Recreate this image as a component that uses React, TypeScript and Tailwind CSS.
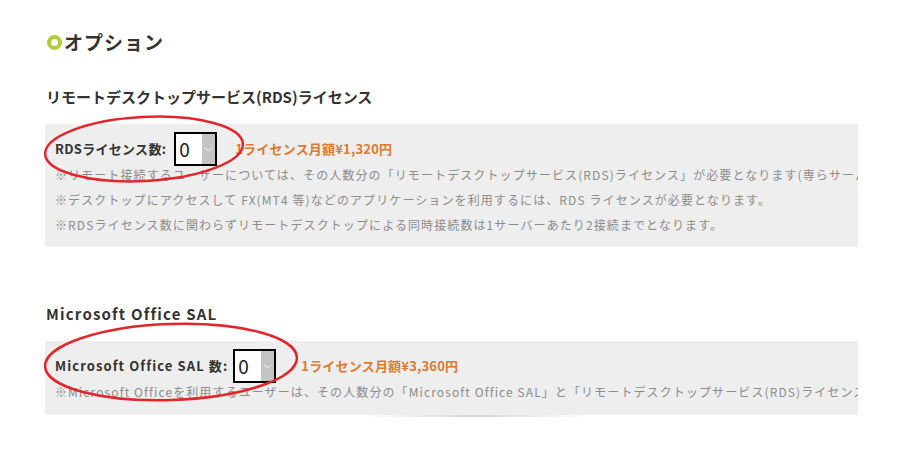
import { ChevronDown } from 'lucide-react';

const FONT = { fontFamily: '"Noto Sans CJK JP", "Noto Sans", sans-serif' };

function CountSelect() {
  return (
    <div className="inline-flex h-[34px] w-[43px] shrink-0 border-2 border-black bg-white">
      <span className="flex-1 pl-[3px] text-[19px] leading-[30px] text-[#222]">0</span>
      <span className="flex w-[13px] items-center justify-center bg-[#c4c4c4]">
        <ChevronDown size={13} strokeWidth={1.8} className="text-[#f4f4f4]" />
      </span>
    </div>
  );
}

function Note({ children }: { children: React.ReactNode }) {
  return (
    <p className="whitespace-nowrap text-[12px] leading-[25px] tracking-[1.1px] text-[#8c8c8c]">{children}</p>
  );
}

export default function App() {
  return (
    <div className="relative h-[468px] w-[913px] overflow-hidden bg-white" style={FONT}>
      <div className="pl-[45px] pt-[30px]">
        <h2 className="flex items-center text-[19px] font-bold leading-[24px] tracking-[1px] text-[#333]">
          <span className="mr-[2px] ml-[2px] inline-block h-[15px] w-[15px] shrink-0 rounded-full border-[4px] border-[#b3cd3a]" />
          オプション
        </h2>

        <h3 className="mt-[32px] pl-[1px] text-[15px] font-bold leading-[22px] text-[#333]">
          リモートデスクトップサービス(RDS)ライセンス
        </h3>
        <div className="mt-[16px] w-[813px] overflow-hidden bg-[#eeeeee] pb-[10px] pl-[10px] pt-[8px]">
          <div className="flex items-center">
            <span className="text-[13px] font-bold tracking-[0.3px] text-[#333]">RDSライセンス数:</span>
            <span className="ml-[8px]">
              <CountSelect />
            </span>
            <span className="ml-[18px] text-[13px] font-bold tracking-[0.2px] text-[#dd7a2d]">1ライセンス月額¥1,320円</span>
          </div>
          <div className="-mt-[4px]">
            <Note>※リモート接続するユーザーについては、その人数分の「リモートデスクトップサービス(RDS)ライセンス」が必要となります(専らサーバーの管理のみを目的とする場合は除きます)。</Note>
            <Note>※デスクトップにアクセスして FX(MT4 等)などのアプリケーションを利用するには、RDS ライセンスが必要となります。</Note>
            <Note>※RDSライセンス数に関わらずリモートデスクトップによる同時接続数は1サーバーあたり2接続までとなります。</Note>
          </div>
        </div>

        <h3 className="mt-[56px] pl-[1px] text-[15px] font-bold leading-[22px] tracking-[1.2px] text-[#333]">
          Microsoft Office SAL
        </h3>
        <div className="mt-[16px] w-[813px] overflow-hidden bg-[#eeeeee] pb-[11px] pl-[10px] pt-[8px]">
          <div className="flex items-center">
            <span className="text-[13px] font-bold tracking-[1.1px] text-[#333]">Microsoft Office SAL 数:</span>
            <span className="ml-[5px]">
              <CountSelect />
            </span>
            <span className="ml-[25px] text-[13px] font-bold tracking-[0.2px] text-[#dd7a2d]">1ライセンス月額¥3,360円</span>
          </div>
          <div className="-mt-[4px]">
            <Note>※Microsoft Officeを利用するユーザーは、その人数分の「Microsoft Office SAL」と「リモートデスクトップサービス(RDS)ライセンス」が必要となります。</Note>
          </div>
        </div>
        <div className="ml-[320px] h-[2px] w-[222px] bg-gradient-to-r from-transparent via-[#d6d6d6] to-transparent" />
      </div>

      <svg className="pointer-events-none absolute left-0 top-0" width="913" height="468" viewBox="0 0 913 468">
        <ellipse cx="144" cy="149" rx="99" ry="32" transform="rotate(-3 144 149)" fill="none" stroke="#e2262b" strokeWidth="2.5" />
        <ellipse cx="171" cy="362" rx="126" ry="38" transform="rotate(-2 171 362)" fill="none" stroke="#e2262b" strokeWidth="2.5" />
      </svg>
    </div>
  );
}
